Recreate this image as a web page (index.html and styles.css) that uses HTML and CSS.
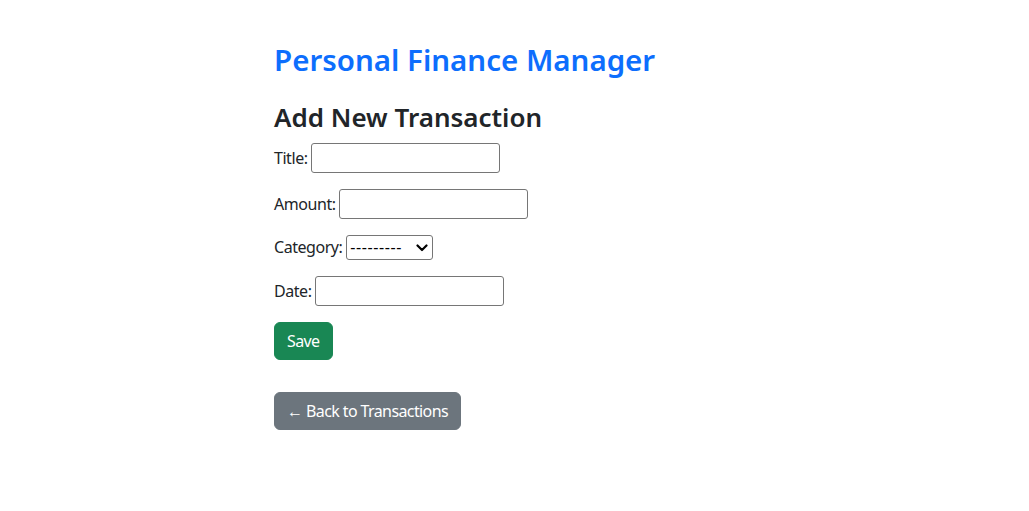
FILE: index.html
```html
<!DOCTYPE html>
<html lang="en">
<head>
<meta charset="utf-8">
<title>Add Transaction</title>
<link rel="stylesheet" href="styles.css">
</head>
<body>
<div class="container">
  <h1 class="app-title">Personal Finance Manager</h1>
  <h2 class="page-title">Add New Transaction</h2>
  <form class="tx-form">
    <p class="field"><label for="id_title">Title:</label> <input type="text" id="id_title" class="text-input"></p>
    <p class="field"><label for="id_amount">Amount:</label> <input type="text" id="id_amount" class="text-input"></p>
    <p class="field"><label for="id_category">Category:</label> <span class="select-wrap"><select id="id_category" class="select-input"><option>---------</option></select><svg class="chevron" width="12" height="8" viewBox="0 0 12 8" aria-hidden="true"><polyline points="1.5,1.5 6,6 10.5,1.5" fill="none" stroke="#000" stroke-width="2.2" stroke-linecap="round" stroke-linejoin="round"/></svg></span></p>
    <p class="field"><label for="id_date">Date:</label> <input type="text" id="id_date" class="text-input"></p>
    <button type="button" class="btn btn-success">Save</button>
  </form>
  <div class="back-row">
    <a class="btn btn-secondary" href="#">← Back to Transactions</a>
  </div>
</div>
</body>
</html>
```
FILE: styles.css
```css
* { box-sizing: border-box; }
html, body { margin: 0; padding: 0; }
body {
  font-family: "Noto Sans", "Open Sans", sans-serif;
  font-size: 16px;
  line-height: 1.5;
  letter-spacing: -0.45px;
  color: #212529;
  background: #fff;
}
.container {
  width: 481px;
  margin: 0 auto;
  padding-top: 42px;
}
.app-title {
  margin: 0;
  font-size: 29.5px;
  font-weight: 600;
  line-height: 1.2;
  letter-spacing: 0;
  color: #0d6efd;
}
.page-title {
  margin: 25px 0 9.5px;
  font-size: 26px;
  font-weight: 600;
  line-height: 1.2;
  letter-spacing: 0;
  color: #212529;
}
.tx-form { margin: 0; }
.field { margin: 0 0 16px; }
.text-input {
  width: 189px;
  height: 30px;
  padding: 1px 2px;
  border: 1px solid #767676;
  border-radius: 3px;
  font: inherit;
  line-height: 1.5;
  vertical-align: baseline;
}
.select-wrap {
  position: relative;
  display: inline-block;
  vertical-align: top;
}
.select-input {
  -webkit-appearance: none;
  appearance: none;
  display: block;
  font: inherit;
  letter-spacing: 0.6px;
  border: 1px solid #767676;
  border-radius: 3px;
  width: 87px;
  height: 25px;
  padding: 0 0 0 3px;
  line-height: 23px;
  background: #fff;
  color: #000;
}
.chevron {
  position: absolute;
  right: 5px;
  top: 9px;
  pointer-events: none;
}
.btn {
  display: inline-block;
  padding: 6px 12px;
  font: inherit;
  line-height: 1.5;
  letter-spacing: -0.6px;
  border: 1px solid transparent;
  border-radius: 6px;
  color: #fff;
  text-decoration: none;
  cursor: pointer;
}
.btn-success { background: #198754; border-color: #198754; }
.btn-secondary { background: #6c757d; border-color: #6c757d; }
.back-row { margin-top: 32px; }
```
